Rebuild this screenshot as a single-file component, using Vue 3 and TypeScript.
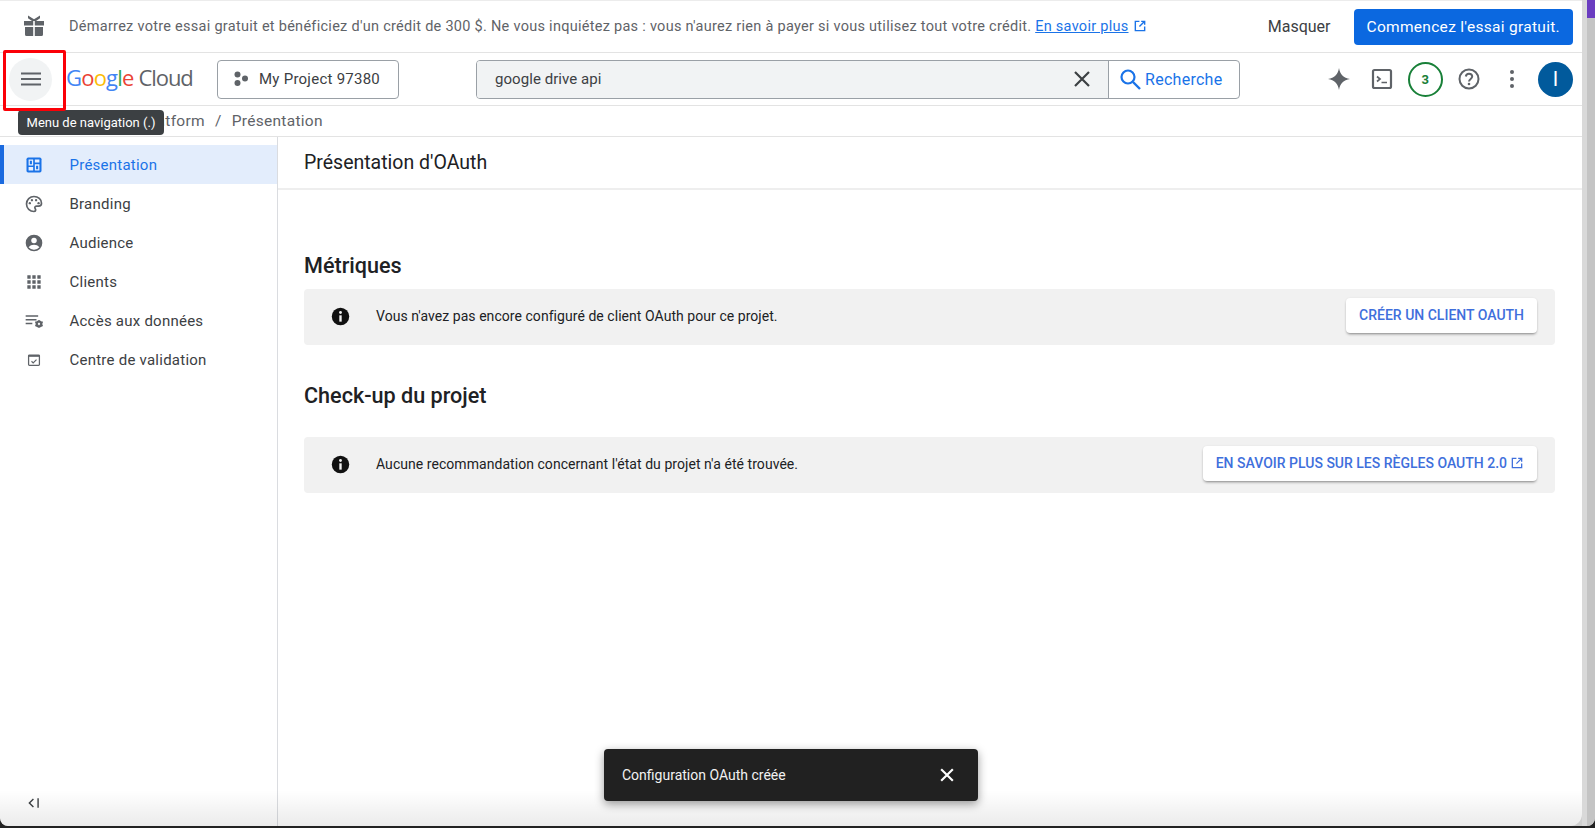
<script setup lang="ts">
const navItems = [
  { label: 'Présentation', icon: 'dash', active: true },
  { label: 'Branding', icon: 'palette', active: false },
  { label: 'Audience', icon: 'person', active: false },
  { label: 'Clients', icon: 'grid', active: false },
  { label: 'Accès aux données', icon: 'data', active: false },
  { label: 'Centre de validation', icon: 'check', active: false },
]
</script>

<template>
  <div class="page">
    <div class="shell">
      <div class="window">
        <header class="banner">
          <svg class="gift" viewBox="0 0 24 24" width="24" height="24"><path fill="#5f6368" d="M2 7h9.200v4.500H2zM12.800 7H22v4.500h-9.200zM3 13h8.200v9H4.500A1.500 1.500 0 0 1 3 20.500zM12.800 13H21v7.500a1.500 1.500 0 0 1-1.500 1.500h-6.700zM6 1.500l6 3.700 6-3.700v2.700L14 7h-4L6 4.200z"/></svg>
          <p class="banner-text">Démarrez votre essai gratuit et bénéficiez d'un crédit de 300 $. Ne vous inquiétez pas : vous n'aurez rien à payer si vous utilisez tout votre crédit. <a class="link">En savoir plus</a><svg class="ext" viewBox="0 0 24 24" width="14" height="14"><path fill="none" stroke="#1a73e8" stroke-width="2.400" d="M11 4H4v16h16v-7M14 4h6v6M20 4l-9 9"/></svg></p>
          <span class="hide">Masquer</span>
          <span class="trial">Commencez l'essai gratuit.</span>
        </header>

        <div class="topbar">
          <div class="menu-btn">
            <svg viewBox="0 0 24 24" width="24" height="24"><path fill="#5f6368" d="M2 5.500h20v2H2zM2 11h20v2H2zM2 16.500h20v2H2z"/></svg>
          </div>
          <div class="logo"><span class="lg-word"><span class="lg-b">G</span><span class="lg-r">o</span><span class="lg-y">o</span><span class="lg-b">g</span><span class="lg-g">l</span><span class="lg-r">e</span></span><span class="lg-c">Cloud</span></div>
          <div class="project">
            <svg viewBox="0 0 16 16" width="16" height="16"><circle cx="4.500" cy="3.500" r="3" fill="#5f6368"/><circle cx="4.500" cy="12" r="3" fill="#5f6368"/><circle cx="12" cy="7.500" r="3" fill="#5f6368"/></svg>
            <span>My Project 97380</span>
          </div>
          <div class="search">
            <div class="search-input">
              <span>google drive api</span>
              <svg viewBox="0 0 24 24" width="24" height="24"><path fill="none" stroke="#3c4043" stroke-width="2.200" d="M5 5l14 14M19 5L5 19"/></svg>
            </div>
            <div class="search-btn">
              <svg viewBox="0 0 24 24" width="24" height="24"><circle cx="10" cy="10" r="6.500" fill="none" stroke="#1a73e8" stroke-width="2.200"/><path stroke="#1a73e8" stroke-width="2.400" d="M15 15l7 7"/></svg>
              <span>Recherche</span>
            </div>
          </div>
          <div class="tools">
            <svg viewBox="0 0 24 24" width="24" height="24"><path fill="#5f6368" d="M12 1c1 6.500 4.500 10 11 11-6.500 1-10 4.500-11 11-1-6.500-4.500-10-11-11 6.500-1 10-4.500 11-11z"/></svg>
            <svg viewBox="0 0 24 24" width="24" height="24"><rect x="3" y="3" width="18" height="18" rx="1.500" fill="none" stroke="#5f6368" stroke-width="2.200"/><path fill="none" stroke="#5f6368" stroke-width="1.700" d="M7 9.500l3 2.500-3 2.500M11.500 15.500H17"/></svg>
            <span class="badge">3</span>
            <svg viewBox="0 0 24 24" width="24" height="24"><circle cx="12" cy="12" r="9.500" fill="none" stroke="#5f6368" stroke-width="2"/><path fill="none" stroke="#5f6368" stroke-width="2" d="M8.800 9.500A3.200 3.200 0 0 1 12 6.800c1.800 0 3.200 1.200 3.200 2.800 0 2.300-3.200 2.400-3.200 4.900"/><circle cx="12" cy="17" r="1.300" fill="#5f6368"/></svg>
            <svg viewBox="0 0 24 24" width="24" height="24"><circle cx="12" cy="5" r="2" fill="#5f6368"/><circle cx="12" cy="12" r="2" fill="#5f6368"/><circle cx="12" cy="19" r="2" fill="#5f6368"/></svg>
            <span class="avatar">I</span>
          </div>
        </div>

        <div class="crumbs">
          <span>Google Auth Platform</span><span class="sep">/</span><span>Présentation</span>
        </div>

        <div class="body">
          <aside class="side">
            <nav class="nav">
              <div v-for="item in navItems" :key="item.label" class="nav-item" :class="{ active: item.active }">
                <svg class="nav-icon" viewBox="0 0 24 24" width="20" height="20">
                  <template v-if="item.icon === 'dash'">
                    <rect x="3" y="3" width="18" height="18" rx="2" fill="#1a73e8"/>
                    <path fill="#e8f0fe" d="M5.500 5.500h5.500v7H5.500zM13 5.500h5.500v3.500H13zM5.500 14.500H11v4H5.500zM13 11h5.500v7.500H13z"/>
                    <path fill="#1a73e8" d="M7 7h2.500v4H7zM14.500 13h2.500v4h-2.500z"/>
                  </template>
                  <template v-else-if="item.icon === 'palette'">
                    <path fill="none" stroke="#5f6368" stroke-width="2" d="M12 3a9 9 0 0 0 0 18c1.500 0 2-1 2-2 0-1.300-1-1.500-1-2.700 0-1 .8-1.800 2-1.800h2.500c2 0 3.500-1.500 3.500-3.500C21 6.500 17 3 12 3z"/>
                    <circle cx="7" cy="11" r="1.400" fill="#5f6368"/><circle cx="9.500" cy="7.500" r="1.400" fill="#5f6368"/><circle cx="14.500" cy="7.500" r="1.400" fill="#5f6368"/><circle cx="17.500" cy="11" r="1.400" fill="#5f6368"/>
                  </template>
                  <template v-else-if="item.icon === 'person'">
                    <circle cx="12" cy="12" r="10" fill="#5f6368"/>
                    <circle cx="12" cy="9" r="3.300" fill="#fff"/>
                    <path fill="#fff" d="M5.500 17.200c1.500-2.300 4-3.200 6.500-3.200s5 .9 6.500 3.200A8.500 8.500 0 0 1 12 20a8.500 8.500 0 0 1-6.500-2.800z"/>
                  </template>
                  <template v-else-if="item.icon === 'grid'">
                    <path fill="#5f6368" d="M4 4h4v4H4zM10 4h4v4h-4zM16 4h4v4h-4zM4 10h4v4H4zM10 10h4v4h-4zM16 10h4v4h-4zM4 16h4v4H4zM10 16h4v4h-4zM16 16h4v4h-4z"/>
                  </template>
                  <template v-else-if="item.icon === 'data'">
                    <path fill="#5f6368" d="M2 5h15v1.800H2zM2 9.500h13v1.800H2zM2 14h8v1.800H2z"/>
                    <circle cx="18" cy="15.500" r="3" fill="none" stroke="#5f6368" stroke-width="2.400"/>
                    <path stroke="#5f6368" stroke-width="1.600" d="M18 10.800v9.400M13.500 13l9 5M13.500 18l9-5"/>
                    <circle cx="18" cy="15.500" r="1.300" fill="#fff"/>
                  </template>
                  <template v-else>
                    <rect x="5.500" y="6" width="13" height="12.500" rx="1" fill="none" stroke="#5f6368" stroke-width="1.500"/>
                    <path fill="#5f6368" d="M5.500 6h13v2.200h-13z"/>
                    <path fill="none" stroke="#5f6368" stroke-width="1.400" d="M9 13.500l2 2 4-4"/>
                  </template>
                </svg>
                <span>{{ item.label }}</span>
              </div>
            </nav>
            <div class="collapse">
              <svg viewBox="0 0 24 24" width="14" height="14"><path fill="none" stroke="#3c4043" stroke-width="2.400" d="M11 5l-7 7 7 7M19 4v16"/></svg>
            </div>
          </aside>

          <main class="main">
            <div class="title-bar"><h1>Présentation d'OAuth</h1></div>
            <section class="content">
              <h2 class="h-metrics">Métriques</h2>
              <div class="notice">
                <svg viewBox="0 0 24 24" width="19" height="19"><circle cx="12" cy="12" r="11" fill="#111"/><rect x="10.500" y="10.500" width="3" height="8" fill="#f1f1f1"/><circle cx="12" cy="7" r="1.800" fill="#f1f1f1"/></svg>
                <span class="notice-text">Vous n'avez pas encore configuré de client OAuth pour ce projet.</span>
                <span class="raised">CRÉER UN CLIENT OAUTH</span>
              </div>
              <h2 class="h-check">Check-up du projet</h2>
              <div class="notice">
                <svg viewBox="0 0 24 24" width="19" height="19"><circle cx="12" cy="12" r="11" fill="#111"/><rect x="10.500" y="10.500" width="3" height="8" fill="#f1f1f1"/><circle cx="12" cy="7" r="1.800" fill="#f1f1f1"/></svg>
                <span class="notice-text">Aucune recommandation concernant l'état du projet n'a été trouvée.</span>
                <span class="raised">EN SAVOIR PLUS SUR LES RÈGLES OAUTH 2.0<svg class="ext2" viewBox="0 0 24 24" width="14" height="14"><path fill="none" stroke="#3f6fdc" stroke-width="2.200" d="M11 4H4v16h16v-7M14 4h6v6M20 4l-9 9"/></svg></span>
              </div>
            </section>
          </main>
        </div>

        <div class="fade"></div>
        <div class="tooltip">Menu de navigation (.)</div>
        <div class="redbox"></div>
        <div class="snackbar">
          <span>Configuration OAuth créée</span>
          <svg viewBox="0 0 24 24" width="20" height="20"><path fill="none" stroke="#fff" stroke-width="2.600" d="M5 5l14 14M19 5L5 19"/></svg>
        </div>
      </div>
      <div class="edge"><div class="edge-purple"></div></div>
    </div>
  </div>
</template>

<style>
html, body { margin: 0; padding: 0; background: #222; overflow: hidden; }
</style>

<style scoped>
* { box-sizing: border-box; }
.page { width: 1595px; height: 828px; font-family: Roboto, "Liberation Sans", sans-serif; background: #222; overflow: hidden; }
.shell { display: flex; height: 826px; background: #cfcfcf; border-radius: 0 0 8px 8px; overflow: hidden; }
.window { position: relative; flex: 1; display: flex; flex-direction: column; min-width: 0; background: #fff; overflow: hidden; border-radius: 0 0 12px 8px; }
.edge { width: 13px; flex: none; padding-left: 5px; background: linear-gradient(to right, #d9d9d9, #d9d9d9 5px, #c4c4c4 5px); }
.edge-purple { height: 18px; background: #6a3cc0; }

.banner { height: 53px; flex: none; display: flex; align-items: center; padding: 0 9px 0 22px; border-bottom: 1px solid #e3e3e3; border-top: 1px solid #ececec; }
.gift { flex: none; margin-top: -2px; }
.banner-text { margin: 0 0 0 23px; flex: 1; font-size: 14.500px; color: #5f6368; white-space: nowrap; letter-spacing: 0.275px; }
.link { color: #1a73e8; text-decoration: underline; }
.ext { margin-left: 4px; vertical-align: -2px; }
.hide { font-size: 16px; color: #3c4043; margin-right: 23px; }
.trial { background: #0b68e0; color: #fff; font-size: 15.500px; letter-spacing: 0.300px; height: 36px; line-height: 36px; padding: 0 13px; border-radius: 4px; white-space: nowrap; }

.topbar { height: 53px; flex: none; display: flex; align-items: center; padding: 0 9px; border-bottom: 1px solid #e3e3e3; }
.menu-btn { width: 43px; height: 43px; border-radius: 50%; background: #f1f3f4; display: flex; align-items: center; justify-content: center; flex: none; }
.logo { margin-left: 14px; width: 149px; display: flex; align-items: baseline; padding-bottom: 4px; font-family: "Open Sans", sans-serif; font-size: 22px; white-space: nowrap; flex: none; }
.lg-word { letter-spacing: -0.800px; margin-right: 5px; }
.lg-b { color: #4285f4; } .lg-r { color: #ea4335; } .lg-y { color: #fbbc04; } .lg-g { color: #34a853; }
.lg-c { color: #5f6368; letter-spacing: -1.100px; }
.project { margin-left: 2px; width: 182px; height: 39px; flex: none; border: 1px solid #9aa0a6; border-radius: 4px; display: flex; align-items: center; padding-left: 15px; gap: 10px; font-size: 15px; color: #3c4043; letter-spacing: 0.250px; }
.search { margin-left: 77px; width: 764px; height: 39px; flex: none; display: flex; border: 1px solid #9aa0a6; border-radius: 4px; overflow: hidden; }
.search-input { flex: 1; background: #f1f3f4; display: flex; align-items: center; justify-content: space-between; padding: 0 14px 0 18px; font-size: 15px; letter-spacing: 0.060px; color: #3c4043; border-right: 1px solid #9aa0a6; }
.search-btn { width: 130px; flex: none; display: flex; align-items: center; gap: 3px; padding-left: 9px; color: #1a73e8; font-size: 16px; letter-spacing: 0.280px; }
.tools { margin-left: auto; display: flex; align-items: center; gap: 19.400px; }
.badge { width: 35px; height: 35px; flex: none; border: 2px solid #188038; border-radius: 50%; color: #188038; font-size: 13px; font-weight: 700; display: flex; align-items: center; justify-content: center; margin: 0 -5.500px; }
.avatar { width: 35px; height: 35px; flex: none; border-radius: 50%; background: #015a9c; color: #fff; font-size: 20px; display: flex; align-items: center; justify-content: center; margin-left: -5.500px; }

.crumbs { height: 31px; flex: none; display: flex; align-items: center; padding-left: 50px; font-size: 15.500px; color: #5f6368; border-bottom: 1px solid #e3e3e3; letter-spacing: 0.300px; }
.sep { margin: 0 10px; }

.body { flex: 1; display: flex; min-height: 0; }
.side { width: 278px; flex: none; border-right: 1px solid #dadce0; display: flex; flex-direction: column; padding-top: 8px; }
.nav { flex: 1; }
.nav-item { height: 39px; display: flex; align-items: center; padding-left: 24px; gap: 25.500px; font-size: 15px; color: #3c4043; letter-spacing: 0.240px; }
.nav-item.active { background: #e3edfc; color: #1a73e8; box-shadow: inset 4px 0 0 #1a6adf; }
.nav-icon { flex: none; }
.collapse { height: 38px; padding: 0 0 9px 27px; display: flex; align-items: center; }

.main { flex: 1; min-width: 0; }
.title-bar { height: 53px; border-bottom: 2px solid #eeeeee; padding-left: 26px; display: flex; align-items: center; }
h1 { margin: 0; font-size: 19.500px; font-weight: 400; color: #202124; }
.content { padding: 0 27px 0 26px; }
h2 { margin: 0; font-size: 21.600px; font-weight: 500; color: #202124; line-height: 26px; }
.h-metrics { padding-top: 63px; padding-bottom: 10px; }
.h-check { padding-top: 38px; padding-bottom: 28px; }
.notice { height: 56px; background: #f1f1f1; border-radius: 4px; display: flex; align-items: center; padding: 0 18px 2px 27px; }
.notice-text { flex: 1; margin-left: 26px; font-size: 14px; letter-spacing: 0.050px; color: #202124; }
.raised { background: #fff; color: #3f6fdc; font-size: 14px; font-weight: 500; height: 35px; display: flex; align-items: center; padding: 0 13px; border-radius: 4px; box-shadow: 0 2px 3px -1px rgba(0,0,0,.45), 0 0 2px rgba(0,0,0,.08); margin-top: -2px; }
.ext2 { margin-left: 3px; }

.tooltip { position: absolute; left: 18px; top: 110px; width: 146px; height: 25px; background: #3c4043; color: #fff; border-radius: 4px; font-size: 13px; display: flex; align-items: center; justify-content: center; }
.redbox { position: absolute; left: 3px; top: 50px; width: 63px; height: 61px; border: 3px solid #fb0007; border-radius: 2px; }
.snackbar { position: absolute; left: 604px; top: 749px; width: 374px; height: 52px; background: #212121; border-radius: 4px; box-shadow: 0 3px 10px rgba(0,0,0,.4); color: #f1f1f1; font-size: 14px; display: flex; align-items: center; justify-content: space-between; padding: 0 21px 0 18px; }
.fade { position: absolute; left: 0; right: 0; bottom: 0; height: 36px; background: linear-gradient(to bottom, rgba(0,0,0,0), rgba(0,0,0,.08)); pointer-events: none; }
</style>
